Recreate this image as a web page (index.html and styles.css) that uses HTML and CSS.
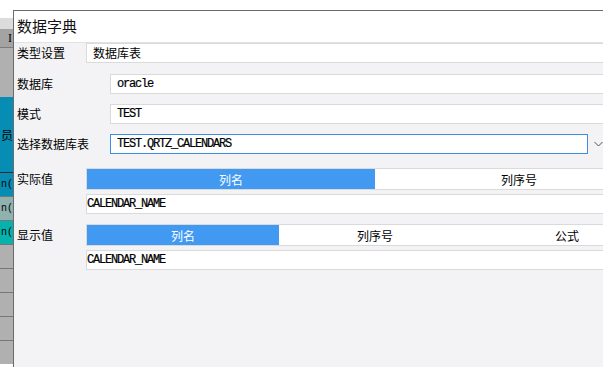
FILE: index.html
```html
<!DOCTYPE html>
<html lang="zh-CN">
<head>
  <meta charset="UTF-8">
  <title>数据字典</title>
  <link rel="stylesheet" href="styles.css">
</head>
<body>
  <div class="bg-strip">
    <div class="s-top"></div>
    <div class="s-tabs"></div>
    <div class="s-head"><span>I</span></div>
    <div class="s-gray"></div>
    <div class="s-teal"><span>员</span></div>
    <div class="s-row teal"><span>n(</span></div>
    <div class="s-row grayteal"><span>n(</span></div>
    <div class="s-row cyan"><span>n(</span></div>
    <div class="s-row"></div>
    <div class="s-row"></div>
    <div class="s-row"></div>
    <div class="s-row"></div>
    <div class="s-row"></div>
  </div>

  <div class="dialog">
    <div class="title">数据字典</div>

    <div class="form">
      <div class="field first">
        <label class="lbl short">类型设置</label>
        <div class="input cjk">数据库表</div>
      </div>
      <div class="field gap11">
        <label class="lbl">数据库</label>
        <div class="input mono">oracle</div>
      </div>
      <div class="field">
        <label class="lbl">模式</label>
        <div class="input mono">TEST</div>
      </div>
      <div class="field">
        <label class="lbl">选择数据库表</label>
        <div class="input mono focused">TEST.QRTZ_CALENDARS</div>
        <div class="combo-btn">
          <svg width="9" height="6" viewBox="0 0 9 6"><path d="M0.5 1 L4.5 5 L8.5 1" fill="none" stroke="#555" stroke-width="1"/></svg>
        </div>
      </div>

      <div class="field group">
        <label class="lbl short">实际值</label>
        <div class="tabs">
          <div class="tab active">列名</div>
          <div class="tab">列序号</div>
        </div>
      </div>
      <div class="value-row">
        <div class="input mono flat">CALENDAR_NAME</div>
      </div>

      <div class="field">
        <label class="lbl short">显示值</label>
        <div class="tabs">
          <div class="tab active">列名</div>
          <div class="tab">列序号</div>
          <div class="tab">公式</div>
        </div>
      </div>
      <div class="value-row">
        <div class="input mono flat">CALENDAR_NAME</div>
      </div>
    </div>
  </div>
</body>
</html>
```

FILE: styles.css
```css
html, body {
  margin: 0;
  height: 367px;
  overflow: hidden;
}
body {
  display: flex;
  background-color: #ffffff;
  font-family: "Noto Sans CJK SC", "Noto Sans", sans-serif;
  font-size: 12px;
  color: #000000;
}

/* app behind the dialog */
.bg-strip {
  width: 13px;
  flex-shrink: 0;
  display: flex;
  flex-direction: column;
  overflow: hidden;
}
.bg-strip > div {
  display: flex;
  align-items: center;
  justify-content: flex-end;
  white-space: nowrap;
  flex-shrink: 0;
}
.s-top {
  height: 18px;
  background-color: #ffffff;
}
.s-tabs {
  height: 11px;
  background-color: #dcdcdc;
}
.s-head {
  height: 18px;
  background-color: #a3a3a3;
  border-bottom: 1px solid #7c7c7c;
  font-family: "Liberation Serif", serif;
  font-size: 12px;
}
.s-head span {
  margin-right: 1px;
}
.s-gray {
  height: 49px;
  background-color: #b0b0b0;
}
.s-teal {
  height: 75px;
  background-color: #078db4;
  font-size: 12px;
}
.s-row {
  height: 23px;
  background-color: #b0b0b0;
  border-top: 1px solid #777777;
}
.s-row span {
  font-family: "Liberation Mono", monospace;
  font-size: 10px;
}
.s-row.teal { background-color: #078db4; border-top-color: #2a2a2a; }
.s-row.grayteal { background-color: #8fb2b0; }
.s-row.cyan { background-color: #05b2ae; }

/* dialog */
.dialog {
  width: 650px;
  flex-shrink: 0;
  margin-top: 10px;
  border-top: 1px solid #6b6b6b;
  border-left: 1px solid #6b6b6b;
  background-color: #f3f3f5;
}
.title {
  height: 31px;
  line-height: 30px;
  padding-left: 3px;
  background-color: #ffffff;
  border-bottom: 1px solid #e2e2e2;
  font-size: 15px;
  color: #111111;
}
.form {
  padding-left: 3px;
}
.field {
  display: flex;
  align-items: center;
  margin-top: 10px;
}
.field.first {
  margin-top: 0;
}
.field.gap11 {
  margin-top: 11px;
}
.field.group {
  margin-top: 14px;
}
.lbl {
  width: 93px;
  flex-shrink: 0;
  line-height: 20px;
}
.lbl.short {
  width: 69px;
}
.input {
  flex: 1;
  height: 18px;
  line-height: 18px;
  padding-left: 6px;
  background-color: #ffffff;
  border: 1px solid #dadada;
  white-space: nowrap;
}
.mono {
  font-family: "Liberation Mono", monospace;
  font-size: 12px;
  letter-spacing: -1.2px;
  color: #000000;
  -webkit-text-stroke: 0.2px #000000;
}
.input.focused {
  flex: none;
  width: 470px;
  border-color: #3d8ee8;
}
.combo-btn {
  width: 20px;
  height: 20px;
  display: flex;
  align-items: center;
  justify-content: center;
}
.tabs {
  flex: 1;
  display: flex;
  height: 20px;
  border: 1px solid #dadada;
  background-color: #ffffff;
}
.tab {
  flex: 1;
  display: flex;
  align-items: center;
  justify-content: center;
}
.tab.active {
  background-color: #4299f1;
  color: #ffffff;
}
.value-row {
  display: flex;
  margin-top: 4px;
  padding-left: 69px;
}
.input.flat {
  height: 18px;
  padding-left: 0;
}
```
